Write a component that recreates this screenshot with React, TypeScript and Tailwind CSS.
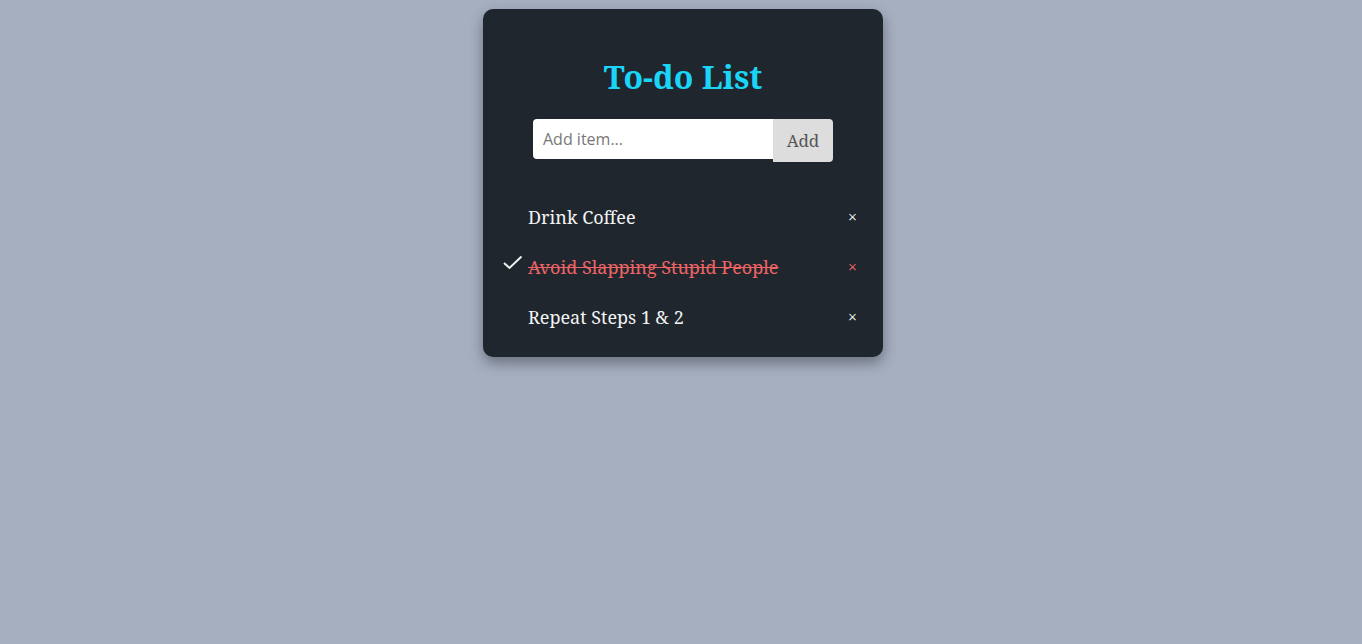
import React, { useState } from "react";

interface TodoItem {
  id: number;
  text: string;
  done: boolean;
}

const serif = { fontFamily: '"Noto Serif", "DejaVu Serif", "Liberation Serif", serif' };

const App: React.FC = () => {
  const [items, setItems] = useState<TodoItem[]>([
    { id: 1, text: "Drink Coffee", done: false },
    { id: 2, text: "Avoid Slapping Stupid People", done: true },
    { id: 3, text: "Repeat Steps 1 & 2", done: false },
  ]);
  const [value, setValue] = useState("");

  const addItem = () => {
    if (!value.trim()) return;
    setItems([...items, { id: Date.now(), text: value, done: false }]);
    setValue("");
  };

  return (
    <div className="min-h-screen bg-[#a5afc0] pt-[9px] pl-[4px]" style={serif}>
      <div className="w-[400px] mx-auto rounded-[10px] bg-[#1f262e] shadow-[0_6px_14px_rgba(0,0,0,0.35)] pt-[52px] pb-[15px]">
        <h1 className="text-center text-[32px] leading-[32px] font-bold text-[#1ad5f7]">
          To-do List
        </h1>
        <div className="flex justify-center mt-[26px]">
          <input
            value={value}
            onChange={(e) => setValue(e.target.value)}
            placeholder="Add item..."
            className="w-[240px] h-[40px] rounded-l bg-white px-[10px] text-[16px] text-[#333] outline-none placeholder:text-[#777]"
            style={{ fontFamily: '"Open Sans", "Noto Sans", sans-serif' }}
          />
          <button
            onClick={addItem}
            className="w-[60px] h-[43px] rounded-r bg-[#dddddd] text-[17px] text-[#555]"
          >
            Add
          </button>
        </div>
        <ul className="mt-[30px]">
          {items.map((item) => (
            <li
              key={item.id}
              onClick={() =>
                setItems(items.map((i) => (i.id === item.id ? { ...i, done: !i.done } : i)))
              }
              className="relative flex items-center h-[50px] pl-[45px] pr-[26px] cursor-pointer"
            >
              {item.done && (
                <svg
                  className="absolute left-[20px] top-[13px]"
                  width="20"
                  height="16"
                  viewBox="0 0 20 16"
                  fill="none"
                  stroke="#f2f2f2"
                  strokeWidth="2"
                >
                  <path d="M1 8 L6.5 13 L18.5 1.5" />
                </svg>
              )}
              <span
                className={
                  item.done
                    ? "flex-1 text-[18px] text-[#ee6464] line-through"
                    : "flex-1 text-[18px] text-[#f4f4f4]"
                }
              >
                {item.text}
              </span>
              <span
                onClick={(e) => {
                  e.stopPropagation();
                  setItems(items.filter((i) => i.id !== item.id));
                }}
                className={
                  item.done
                    ? "text-[16px] text-[#ee6464]"
                    : "text-[16px] text-[#f4f4f4]"
                }
              >
                ×
              </span>
            </li>
          ))}
        </ul>
      </div>
    </div>
  );
};

export default App;
